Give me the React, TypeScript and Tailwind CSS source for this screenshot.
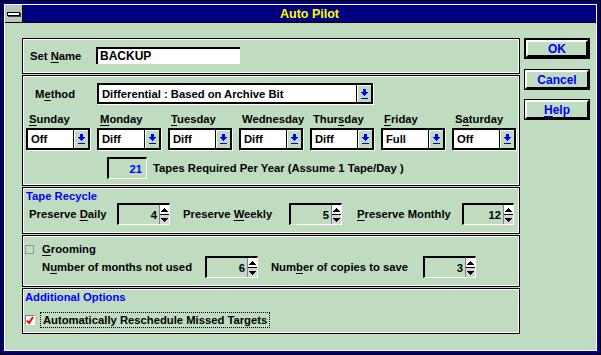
import React from "react"

const GREEN = "bg-[#c0dcc0]"

function U({ children }: { children: React.ReactNode }) {
  return <span className="underline decoration-1 underline-offset-[2px]">{children}</span>
}

function DropArrow() {
  return (
    <svg width="7" height="10" viewBox="0 0 7 10" shapeRendering="crispEdges" className="block">
      <rect x="2" y="0" width="3" height="3" fill="#0000ff" />
      <path d="M0 3H7V4H6V5H5V6H4V7H3V6H2V5H1V4H0Z" fill="#0000ff" />
      <rect x="0" y="9" width="7" height="1" fill="#0000ff" />
    </svg>
  )
}

function UpArrow() {
  return (
    <svg width="7" height="4" viewBox="0 0 7 4" shapeRendering="crispEdges" className="block">
      <path d="M3 0H4V1H5V2H6V3H7V4H0V3H1V2H2V1H3Z" fill="#000" />
    </svg>
  )
}

function DownArrow() {
  return (
    <svg width="7" height="4" viewBox="0 0 7 4" shapeRendering="crispEdges" className="block">
      <path d="M0 0H7V1H6V2H5V3H4V4H3V3H2V2H1V1H0Z" fill="#000" />
    </svg>
  )
}

function Combo({ value, className }: { value: string; className: string }) {
  return (
    <div className={`flex border-2 border-black bg-white shadow-[1px_1px_0_#fff] ${className}`}>
      <div className="flex flex-1 items-center pl-[3px]">{value}</div>
      <div className={`flex w-[15px] items-center justify-center border-l border-black ${GREEN} shadow-[inset_1px_1px_0_#fff]`}>
        <DropArrow />
      </div>
    </div>
  )
}

function Spin({ value, className = "w-[53px]" }: { value: string; className?: string }) {
  return (
    <div
      className={`flex h-[22px] border-t-2 border-l-2 border-b border-r border-t-black border-l-black border-b-white border-r-white ${className}`}
    >
      <div className="flex flex-1 items-center justify-end pr-[2px]">{value}</div>
      <div className="flex w-[10px] flex-col border-l border-[#808080]">
        <div className="flex flex-1 items-center justify-center bg-white">
          <UpArrow />
        </div>
        <div className="h-px bg-black" />
        <div className="flex flex-1 items-center justify-center bg-[#d4d4d4]">
          <DownArrow />
        </div>
      </div>
    </div>
  )
}

function Panel({ className, children }: { className: string; children: React.ReactNode }) {
  return (
    <div className={`border border-black shadow-[inset_0_0_0_1px_#fff] ${className}`}>{children}</div>
  )
}

function Button({ children, isDefault }: { children: React.ReactNode; isDefault?: boolean }) {
  return (
    <div className={`h-[21px] ${isDefault ? "border-2" : "border"} border-black`}>
      <div className="flex h-full items-center justify-center border-t-2 border-l-2 border-b-2 border-r-2 border-t-white border-l-white border-b-black border-r-black text-[12px] text-[#0000ff]">
        {children}
      </div>
    </div>
  )
}

const days = [
  { pre: "", u: "S", post: "unday", value: "Off" },
  { pre: "", u: "M", post: "onday", value: "Diff" },
  { pre: "", u: "T", post: "uesday", value: "Diff" },
  { pre: "Wednesday", u: "", post: "", value: "Diff" },
  { pre: "Thur", u: "s", post: "day", value: "Diff" },
  { pre: "", u: "F", post: "riday", value: "Full" },
  { pre: "S", u: "a", post: "turday", value: "Off" },
]

export default function App() {
  return (
    <div className="h-[355px] w-[601px] border border-black bg-[#000080] p-[3px] font-['Liberation_Sans',Arial,sans-serif] text-[11.25px] font-bold leading-[14px] text-black">
      <div className="flex h-full flex-col border border-white">
        {/* title bar */}
        <div className="flex h-[18px] border-b border-black">
          <div className="flex w-[18px] items-center justify-center border-r border-black bg-[#b8c8b8]">
            <div className="h-[4px] w-[13px] border border-black bg-white shadow-[1px_1px_0_#404040]" />
          </div>
          <div className="flex flex-1 items-center justify-center bg-[#000080] text-[12.5px] text-[#ffff00]">
            Auto Pilot
          </div>
        </div>

        {/* body */}
        <div className={`flex flex-1 ${GREEN} pt-[15px] pl-[17px]`}>
          <div className="flex w-[498px] flex-col gap-[1px]">
            {/* set name */}
            <Panel className="flex h-[36px] items-center pl-[7px]">
              <div className="w-[66px]">
                Set <U>N</U>ame
              </div>
              <div className="-mt-[2px] flex h-[17px] w-[144px] items-center border-t-2 border-l-2 border-black bg-white pl-[2px] text-[12px]">
                BACKUP
              </div>
            </Panel>

            {/* method */}
            <Panel className="flex h-[111px] flex-col pt-[7px] pl-[3px]">
              <div className="flex h-[21px] items-center">
                <div className="ml-[9px] w-[62px]">
                  M<U>e</U>thod
                </div>
                <Combo value="Differential : Based on Archive Bit" className="h-[21px] w-[276px]" />
              </div>
              <div className="mt-[8px] flex gap-[7px]">
                {days.map((d) => (
                  <div key={d.value + d.pre + d.u} className="flex w-[64px] flex-col">
                    <div className="mb-[2px] ml-[3px] whitespace-nowrap">
                      {d.pre}
                      {d.u && <U>{d.u}</U>}
                      {d.post}
                    </div>
                    <Combo value={d.value} className="h-[22px] w-[64px]" />
                  </div>
                ))}
              </div>
              <div className="mt-[7px] flex items-center">
                <div className="ml-[81px] flex h-[22px] w-[40px] items-center justify-end border-t-2 border-l-2 border-b border-r border-t-black border-l-black border-b-white border-r-white pr-[4px] text-[#0000ff]">
                  21
                </div>
                <div className="ml-[6px] whitespace-nowrap">Tapes Required Per Year (Assume 1 Tape/Day )</div>
              </div>
            </Panel>

            {/* tape recycle */}
            <Panel className="flex h-[47px] flex-col pt-[1px]">
              <div className="pl-[3px] text-[#0000ff]">Tape Recycle</div>
              <div className="flex items-center pl-[6px]">
                <div className="w-[88px]">
                  Preserve <U>D</U>aily
                </div>
                <Spin value="4" />
                <div className="ml-[13px] w-[106px]">
                  Preserve <U>W</U>eekly
                </div>
                <Spin value="5" />
                <div className="ml-[15px] w-[105px]">
                  <U>P</U>reserve Monthly
                </div>
                <Spin value="12" className="w-[52px]" />
              </div>
            </Panel>

            {/* grooming */}
            <Panel className="flex h-[52px] flex-col pt-[6px]">
              <div className="flex items-center pl-[2px]">
                <div className="h-[9px] w-[9px] border border-[#909890] bg-[#c8dcc8]" />
                <div className="ml-[8px]">
                  <U>G</U>rooming
                </div>
              </div>
              <div className="flex items-center pl-[19px]">
                <div className="w-[163px]">
                  N<U>u</U>mber of months not used
                </div>
                <Spin value="6" />
                <div className="ml-[13px] w-[152px]">
                  Num<U>b</U>er of copies to save
                </div>
                <Spin value="3" />
              </div>
            </Panel>

            {/* additional options */}
            <Panel className="flex h-[46px] flex-col pt-[1px]">
              <div className="pl-[2px] text-[#0000ff]">Additional Options</div>
              <div className="mt-[8px] flex items-center pl-[2px]">
                <div className="flex h-[10px] w-[10px] items-center justify-center border-t border-l border-b border-r border-t-[#808080] border-l-[#808080] border-b-white border-r-white bg-white">
                  <svg width="8" height="8" viewBox="0 0 8 8" className="block">
                    <path d="M1 4.5L3 7L7 1" stroke="#ff0000" strokeWidth="2" fill="none" />
                  </svg>
                </div>
                <div className="ml-[5px] border border-dotted border-black px-[2px]">
                  Automatically Reschedule Missed Targets
                </div>
              </div>
            </Panel>
          </div>

          {/* buttons */}
          <div className="ml-[4px] flex w-[66px] flex-col">
            <Button isDefault>OK</Button>
            <div className="mt-[10px]">
              <Button>Cancel</Button>
            </div>
            <div className="mt-[9px]">
              <Button>
                <U>H</U>elp
              </Button>
            </div>
          </div>
        </div>
      </div>
    </div>
  )
}
